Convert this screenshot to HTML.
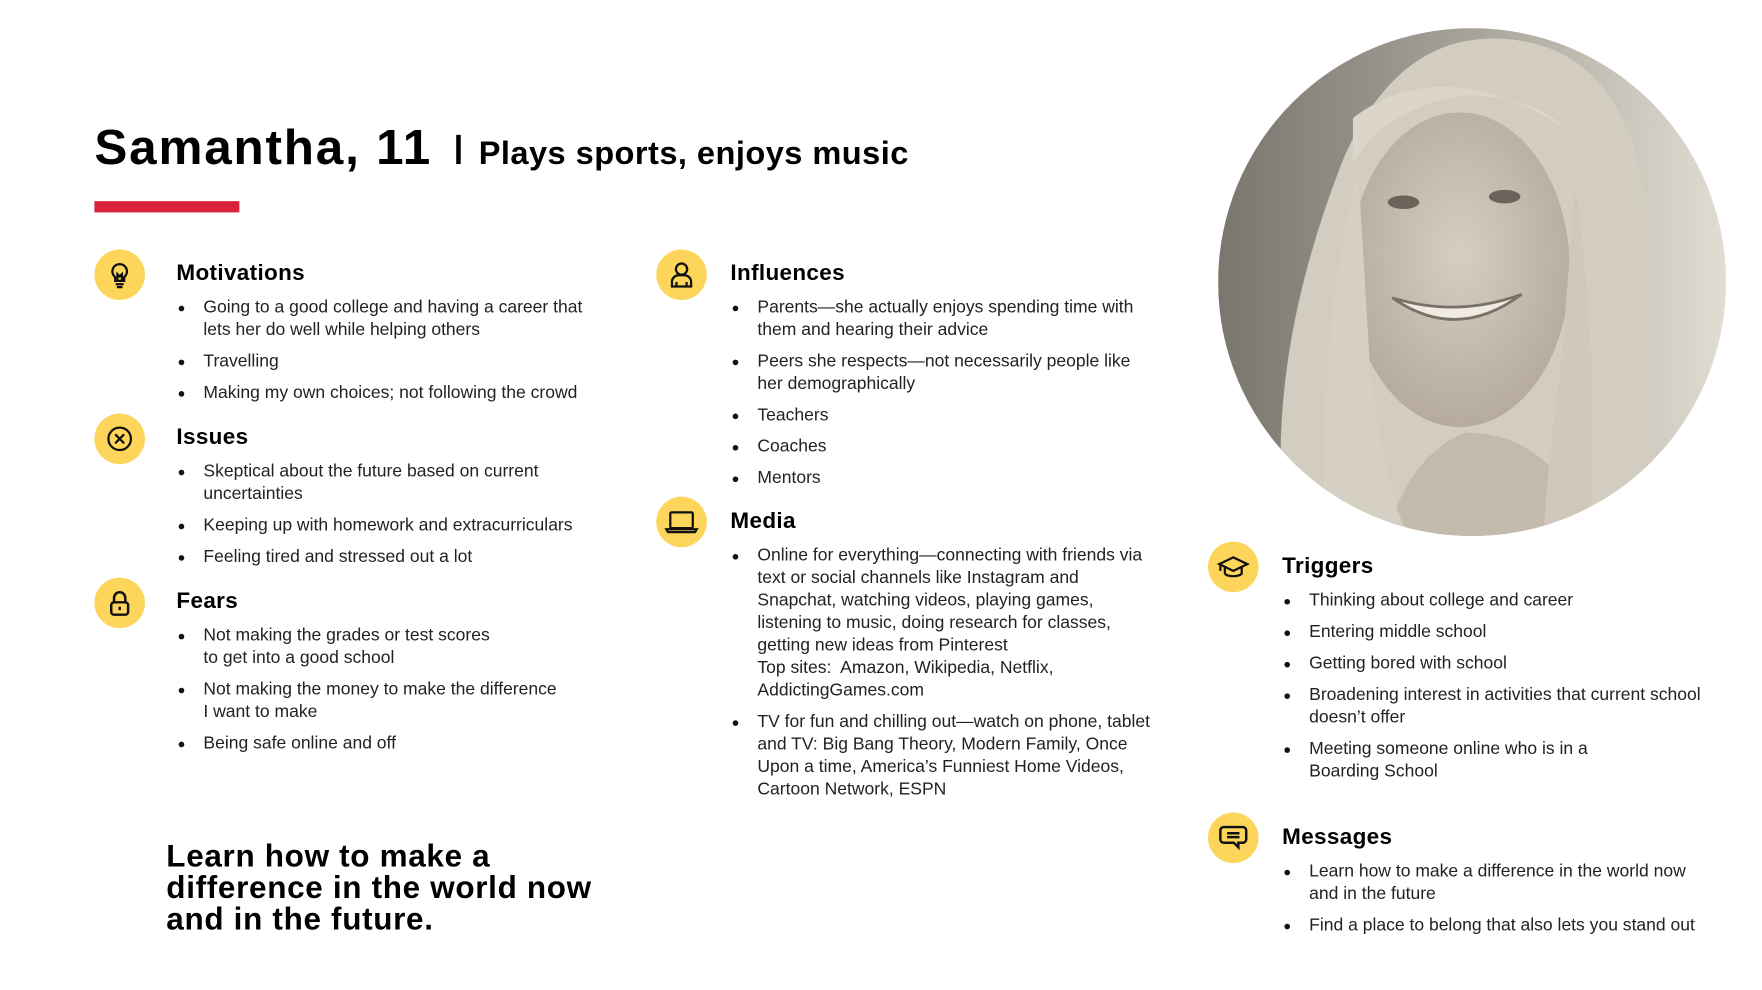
<!DOCTYPE html>
<html><head><meta charset="utf-8"><style>
html,body{margin:0;padding:0;background:#fff;}
body{width:1762px;height:990px;overflow:hidden;position:relative;}
#s{position:absolute;left:0;top:0;width:1568px;height:881px;transform:scale(1.12372);transform-origin:0 0;font-family:"Liberation Sans",sans-serif;color:#1e1e1e;}
.a{position:absolute;}
.t1{left:84px;top:104px;font-size:44px;font-weight:bold;color:#000;letter-spacing:1.6px;white-space:nowrap;line-height:56px;}
.sub{left:426px;top:117px;font-size:29px;font-weight:bold;color:#000;white-space:nowrap;line-height:40px;letter-spacing:0.4px;}
.vb{left:406px;top:120px;width:4px;height:26px;background:#000;}
.bar{left:84px;top:179px;width:129px;height:10px;background:#d9223a;}
.ic{width:45px;height:45px;border-radius:50%;background:#fdd55a;}
.ic svg{position:absolute;left:0;top:0;}
.sec{position:absolute;}
.sec h2{margin:0;font-size:20px;line-height:24px;font-weight:bold;color:#000;letter-spacing:0.3px;}
.sec ul{margin:9px 0 0 0;padding:0;list-style:none;}
.sec li{position:relative;padding-left:24px;font-size:15.6px;line-height:20px;margin-bottom:8px;color:#222;white-space:nowrap;}
.sec li:before{content:"";position:absolute;left:2px;top:8px;width:5px;height:5px;border-radius:50%;background:#111;}
.q{left:148px;top:748px;font-size:28px;line-height:28px;font-weight:bold;color:#000;letter-spacing:0.6px;}
</style></head><body><div id="s">
<div class="a t1">Samantha, 11</div>
<div class="a vb"></div>
<div class="a sub">Plays sports, enjoys music</div>
<div class="a bar"></div>

<div class="a ic" style="left:84px;top:222px"><svg width="45" height="45" viewBox="0 0 45 45" fill="none" stroke="#111" stroke-width="2"><path d="M22.5 13a6.5 6.5 0 0 0-4 11.6V28h8v-3.4A6.5 6.5 0 0 0 22.5 13z"/><path d="M19 31h7M20 33.5h5M20.5 28v-6l2 2 2-2v6"/></svg></div>
<div class="a ic" style="left:84px;top:368px"><svg width="45" height="45" viewBox="0 0 45 45" fill="none" stroke="#111" stroke-width="2"><circle cx="22.5" cy="22.5" r="10"/><path d="M18.5 18.5l8 8M26.5 18.5l-8 8"/></svg></div>
<div class="a ic" style="left:84px;top:514px"><svg width="45" height="45" viewBox="0 0 45 45" fill="none" stroke="#111" stroke-width="2.2"><path d="M17.5 22v-4a5 5 0 0 1 10 0v4"/><rect x="15" y="22" width="15" height="11" rx="2.5"/><path d="M22.5 26v3"/></svg></div>
<div class="a ic" style="left:584px;top:222px"><svg width="45" height="45" viewBox="0 0 45 45" fill="none" stroke="#111" stroke-width="2"><circle cx="22.5" cy="17.5" r="5"/><path d="M14 33v-5a6 6 0 0 1 6-5h5a6 6 0 0 1 6 5v5zM18 33v-4M27 33v-4"/></svg></div>
<div class="a ic" style="left:584px;top:442px"><svg width="45" height="45" viewBox="0 0 45 45" fill="none" stroke="#111" stroke-width="2"><rect x="12.5" y="14" width="20" height="14" rx="1"/><path d="M9 29h27l-1.5 2.5h-24z"/></svg></div>
<div class="a ic" style="left:1075px;top:482px"><svg width="45" height="45" viewBox="0 0 45 45" fill="none" stroke="#111" stroke-width="2"><path d="M10 20l12.5-6 12.5 6-12.5 6z"/><path d="M15 22.5v6c3 3 12 3 15 0v-6M11 21v5"/></svg></div>
<div class="a ic" style="left:1075px;top:723px"><svg width="45" height="45" viewBox="0 0 45 45" fill="none" stroke="#111" stroke-width="2.2"><path d="M14 13h17a3 3 0 0 1 3 3v8a3 3 0 0 1-3 3h-4v4l-4-4h-9a3 3 0 0 1-3-3v-8a3 3 0 0 1 3-3z"/><path d="M17 18.5h11M17 22h11"/></svg></div>

<div class="sec" style="left:157px;top:231px">
<h2>Motivations</h2><ul>
<li>Going to a good college and having a career that<br>lets her do well while helping others</li>
<li>Travelling</li>
<li>Making my own choices; not following the crowd</li></ul></div>
<div class="sec" style="left:157px;top:377px">
<h2>Issues</h2><ul>
<li>Skeptical about the future based on current<br>uncertainties</li>
<li>Keeping up with homework and extracurriculars</li>
<li>Feeling tired and stressed out a lot</li></ul></div>
<div class="sec" style="left:157px;top:523px">
<h2>Fears</h2><ul>
<li>Not making the grades or test scores<br>to get into a good school</li>
<li>Not making the money to make the difference<br>I want to make</li>
<li>Being safe online and off</li></ul></div>

<div class="sec" style="left:650px;top:231px">
<h2>Influences</h2><ul>
<li>Parents—she actually enjoys spending time with<br>them and hearing their advice</li>
<li>Peers she respects—not necessarily people like<br>her demographically</li>
<li>Teachers</li><li>Coaches</li><li>Mentors</li></ul></div>
<div class="sec" style="left:650px;top:452px">
<h2>Media</h2><ul>
<li>Online for everything—connecting with friends via<br>text or social channels like Instagram and<br>Snapchat, watching videos, playing games,<br>listening to music, doing research for classes,<br>getting new ideas from Pinterest<br>Top sites:&nbsp; Amazon, Wikipedia, Netflix,<br>AddictingGames.com</li>
<li>TV for fun and chilling out—watch on phone, tablet<br>and TV: Big Bang Theory, Modern Family, Once<br>Upon a time, America’s Funniest Home Videos,<br>Cartoon Network, ESPN</li></ul></div>

<div class="sec" style="left:1141px;top:492px">
<h2>Triggers</h2><ul>
<li>Thinking about college and career</li>
<li>Entering middle school</li>
<li>Getting bored with school</li>
<li>Broadening interest in activities that current school<br>doesn’t offer</li>
<li>Meeting someone online who is in a<br>Boarding School</li></ul></div>
<div class="sec" style="left:1141px;top:733px">
<h2>Messages</h2><ul>
<li>Learn how to make a difference in the world now<br>and in the future</li>
<li>Find a place to belong that also lets you stand out</li></ul></div>

<div class="a q">Learn how to make a<br>difference in the world now<br>and in the future.</div>

<svg class="a" style="left:1084px;top:25px" width="452" height="452" viewBox="0 0 452 452">
<defs><clipPath id="c"><circle cx="226" cy="226" r="226"/></clipPath>
<linearGradient id="bg" x1="0" x2="1"><stop offset="0" stop-color="#7a766e"/><stop offset="0.5" stop-color="#a8a399"/><stop offset="1" stop-color="#e2ddd3"/></linearGradient>
<radialGradient id="fc" cx="0.5" cy="0.45" r="0.6"><stop offset="0" stop-color="#d6cec2"/><stop offset="1" stop-color="#b3a899"/></radialGradient></defs>
<g clip-path="url(#c)">
<rect width="452" height="452" fill="url(#bg)"/>
<path d="M60 452 Q40 300 110 120 Q160 0 260 10 Q360 20 380 150 Q400 300 380 452z" fill="#d3cdc1"/>
<path d="M150 452 Q170 380 220 360 Q300 360 330 452z" fill="#c4baac"/>
<ellipse cx="215" cy="215" rx="98" ry="140" fill="url(#fc)"/>
<path d="M120 80 Q200 20 310 90 Q280 60 220 60 Q150 70 120 120z" fill="#dcd6ca"/>
<path d="M95 452 Q90 250 125 130 L135 300 Q150 420 170 452z" fill="#d6d0c4"/>
<path d="M330 452 Q340 300 318 140 L305 300 Q290 420 290 452z" fill="#cfc8bb"/>
<ellipse cx="165" cy="155" rx="14" ry="6" fill="#6a6359"/><ellipse cx="255" cy="150" rx="14" ry="6" fill="#6a6359"/>
<path d="M155 240 Q212 280 270 237 Q212 258 155 240z" fill="#efebe3" stroke="#7a7066" stroke-width="2.5"/>
</g></svg>
</div></body></html>
